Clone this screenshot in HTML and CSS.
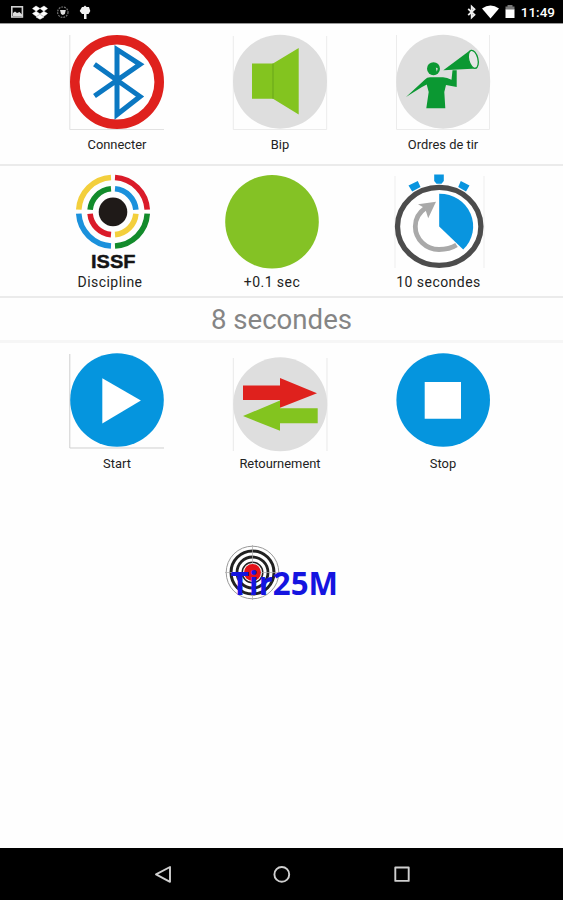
FILE: index.html
```html
<!DOCTYPE html>
<html lang="fr">
<head>
<meta charset="utf-8">
<meta name="viewport" content="width=device-width">
<title>Tir25M</title>
<link rel="stylesheet" href="styles.css">
</head>
<body>
<div class="screen">
  <header class="status">
    <svg class="status-left" viewBox="0 0 100 23">
      <rect x="11.8" y="6.8" width="10.6" height="10.2" fill="none" stroke="#d0d0d0" stroke-width="1.6"/>
      <path d="M13 16v-3l2-1.500 2 1.500 2.500-1 2.500 2.500V16z" fill="#ddd"/>
      <path d="M36 6l4 2.500-3.800 2.700L32.500 8.600zM44 6l3.500 2.600-3.700 2.600L40 8.500zM32.500 13.500l3.700-2.300L40 14l-3.800 2.300zM47.500 13.500l-3.700-2.300L40 14l3.900 2.300zM36 17l4-2.600 4 2.600-4 2.300z" fill="#fff" stroke="#fff" stroke-width=".5"/>
      <circle cx="62.800" cy="12.200" r="5.200" fill="none" stroke="#777" stroke-width="1.200" stroke-dasharray="1.800 1"/>
      <path d="M60 10h5.800l-1 4-2 1-1.800-1z" fill="#ddd"/>
      <path d="M82 7l1.500 0 1.500-1.500 1.600 1.500H89l1.300 4-1.800 3h-2v5h-2.500v-5H82l-2.300-3z" fill="#f2f2f2"/>
    </svg>
    <div class="status-right">
      <svg class="status-icons" viewBox="464 0 54 23">
        <path d="M468.200 8.800l6.300 6-2.800 2.700V6.500l2.800 2.700-6.300 6" fill="none" stroke="#eee" stroke-width="1.800"/>
        <path d="M482 8.500q8.500-6 17 0l-8.500 10z" fill="#fff"/>
        <path d="M505.500 6.500h2V5h5v1.500h2V10h-9z" fill="#777"/>
        <path d="M505.500 9.500h9v8.500h-9z" fill="#fff"/>
      </svg>
      <span class="clock">11:49</span>
    </div>
  </header>

  <main>
    <section class="row row-top">
      <div class="action">
        <svg class="icon" viewBox="68 33 98 98">
          <path d="M69.800 35v94.500H164" fill="none" stroke="#e2e2e2"/>
          <circle cx="117" cy="82" r="42.200" fill="#fff" stroke="#df211d" stroke-width="9.600"/>
          <path d="M94.500 64.300L140 96.500 117 114.500V49.500L140 64.300 94.500 96" fill="none" stroke="#0b78c2" stroke-width="5"/>
        </svg>
        <span class="label">Connecter</span>
      </div>
      <div class="action">
        <svg class="icon" viewBox="231 33 98 98">
          <path d="M233.300 36v93.500h93.400V36" fill="none" stroke="#ececec"/>
          <circle cx="280" cy="81.700" r="47" fill="#dedede"/>
          <path d="M252 63.500h21L298.700 48v66.500L273 98.800h-21z" fill="#83c41f"/>
          <path d="M273 63.500v35.300" stroke="#68a51a"/>
        </svg>
        <span class="label">Bip</span>
      </div>
      <div class="action">
        <svg class="icon" viewBox="394 33 98 98">
          <path d="M396.500 35v94.500h93V35" fill="none" stroke="#ececec"/>
          <circle cx="443.200" cy="81.700" r="47" fill="#dedede"/>
          <circle cx="433.500" cy="68.700" r="6.500" fill="#0b9832"/>
          <path d="M435.800 67.500l2 1-1 3.300z" fill="#dedede"/>
          <path d="M406 97l19-17.500q2-2.200 5-2.200h13q4 0 8.500 2.500l1-9.500h4.200V87l-10.700-2-1.700 7 1 16.200h-19l2.400-16.200-2-7.500-4.700 2.500z" fill="#0b9832"/>
          <path d="M443.300 70.300L470.500 50l6.500 18.500z" fill="#0b9832"/>
          <ellipse cx="473.300" cy="59.300" rx="4.600" ry="9.200" transform="rotate(-14 473.300 59.300)" fill="#e6e6e6" stroke="#0b9832" stroke-width="1.300"/>
        </svg>
        <span class="label">Ordres de tir</span>
      </div>
    </section>

    <section class="row row-middle">
      <div class="action">
        <svg class="icon" viewBox="64 173 98 98">
          <g fill="none" stroke-width="5.600">
            <path d="M78.760 209.700a34.300 34.300 0 0 1 32.240-32.240" stroke="#f3cf3c"/>
            <path d="M115 177.460a34.300 34.300 0 0 1 32.240 32.240" stroke="#da1b29"/>
            <path d="M147.240 213.700a34.300 34.300 0 0 1-32.240 32.240" stroke="#128b2b"/>
            <path d="M111 245.940a34.300 34.300 0 0 1-32.240-32.240" stroke="#1b91dc"/>
            <path d="M90.100 209.700a23 23 0 0 1 20.900-20.900" stroke="#128b2b"/>
            <path d="M115 188.800a23 23 0 0 1 20.900 20.900" stroke="#1b91dc"/>
            <path d="M135.900 213.700a23 23 0 0 1-20.900 20.900" stroke="#f3cf3c"/>
            <path d="M111 234.600a23 23 0 0 1-20.900-20.900" stroke="#da1b29"/>
          </g>
          <circle cx="113" cy="211.900" r="14.300" fill="#1f1a18"/>
          <text class="issf" x="91" y="267.500" textLength="44.500" lengthAdjust="spacingAndGlyphs">ISSF</text>
        </svg>
        <span class="label label-discipline">Discipline</span>
      </div>
      <div class="action">
        <svg class="icon" viewBox="223 173 98 98"><circle cx="272" cy="221.700" r="46.800" fill="#84c225"/></svg>
        <span class="label">+0.1 sec</span>
      </div>
      <div class="action">
        <svg class="icon" viewBox="389.500 173 98 98">
          <path d="M394.500 176v92M483.500 176v92" stroke="#eee"/>
          <ellipse cx="438.700" cy="226.400" rx="41.700" ry="39" fill="#fff" stroke="#4c4c4c" stroke-width="5.300"/>
          <path d="M433.700 174.500h9.600v6.500l-2.300 2.800h-5l-2.300-2.800zM408 185.500l9.300-4.500 2.700 6-8.300 4.500zM460.300 181l8.700 4.500-3.500 6-7.800-4.500z" fill="#0995df"/>
          <path d="M456 245q-7 4.500-17.500 4.500a23.700 23 0 0 1-23.700-23q0-11.500 10.200-18.500" fill="none" stroke="#a9a9a9" stroke-width="4.800"/>
          <path d="M435.500 201.800L417.500 204.300l7 4 3.200 10z" fill="#a9a9a9"/>
          <path d="M438.700 226.400v-32.700a33.500 32.600 0 0 1 24 55.800z" fill="#0995df"/>
        </svg>
        <span class="label">10 secondes</span>
      </div>
    </section>

    <div class="duration">8 secondes</div>

    <section class="row row-bottom">
      <div class="action">
        <svg class="icon" viewBox="68 351 98 101">
          <path d="M69.800 354v94H164" fill="none" stroke="#cfcfcf"/>
          <circle cx="117" cy="400" r="46.800" fill="#0595de"/>
          <path d="M102.300 378.300L140.900 400.500 102.300 423.500z" fill="#fff"/>
        </svg>
        <span class="label">Start</span>
      </div>
      <div class="action">
        <svg class="icon" viewBox="231 351 98 101">
          <path d="M233.300 358v93M327 358v93" stroke="#e9e9e9"/>
          <circle cx="280.200" cy="404.300" r="47" fill="#dedede"/>
          <path d="M243 385.600h37V378l37 15.200-37 14.500V400h-37z" fill="#df211d"/>
          <path d="M243 416l37-15.500v7.800h37.700v15H280v7.500z" fill="#83c41f"/>
        </svg>
        <span class="label">Retournement</span>
      </div>
      <div class="action">
        <svg class="icon" viewBox="394 351 98 101">
          <circle cx="443.200" cy="400" r="46.800" fill="#0595de"/>
          <path d="M424.700 382H461v36.700h-36.300z" fill="#fff"/>
        </svg>
        <span class="label">Stop</span>
      </div>
    </section>

    <svg class="brand" viewBox="222 542 120 62">
      <g fill="none" stroke="#222">
        <circle cx="252.500" cy="572.500" r="26.300" fill="#fff" stroke="#999" stroke-width="1"/>
        <circle cx="252.500" cy="572.500" r="21.500" stroke-width="3"/>
        <circle cx="252.500" cy="572.500" r="15.500" stroke-width="2.800"/>
        <circle cx="252.500" cy="572.500" r="10.300" stroke-width="1.500"/>
        <path d="M252.500 545v55M225 572.500h55" stroke="#aaa" stroke-width=".7"/>
      </g>
      <circle cx="252.500" cy="572.500" r="8.500" fill="#e31219"/>
      <text class="brand-name" x="231" y="594.500" textLength="107" lengthAdjust="spacingAndGlyphs">Tir25M</text>
    </svg>
  </main>

  <nav class="navbar">
    <svg viewBox="0 848 563 52">
      <g fill="none" stroke="#cfcfcf" stroke-width="1.900" stroke-linejoin="round">
        <path d="M170 867v14.800L156 874.400z"/>
        <circle cx="281.800" cy="874.400" r="7.400"/>
        <rect x="395.300" y="867.500" width="13.400" height="13.400"/>
      </g>
    </svg>
  </nav>
</div>
</body>
</html>
```
FILE: styles.css
```css
* { box-sizing: border-box; }

body {
  margin: 0;
  background: #fefefe;
  font-family: Roboto, "Liberation Sans", sans-serif;
  color: #222;
}

svg { display: block; }

.screen {
  display: flex;
  flex-direction: column;
  width: 563px;
  height: 900px;
}

.status {
  display: flex;
  justify-content: space-between;
  height: 24px;
  background: #000;
  border-bottom: 1px solid #999;
}

.status-left { width: 100px; height: 23px; }
.status-right { display: flex; padding-right: 8px; }
.status-icons { width: 54px; height: 23px; }

.clock {
  width: 37px;
  text-align: right;
  font-size: 13.5px;
  font-weight: 500;
  line-height: 25px;
  color: #fff;
}

main { flex: 1; }

.row { display: grid; }

.row-top,
.row-bottom {
  grid-template-columns: repeat(3, 163px);
  padding-left: 35.5px;
}

.row-top {
  height: 142px;
  padding-top: 9px;
  border-bottom: 2px solid #ebebeb;
}

.row-middle {
  grid-template-columns: 162px 156px 177px;
  height: 132px;
  padding: 7px 0 0 32px;
  border-bottom: 2px solid #ebebeb;
}

.row-bottom { padding-top: 8px; }

.action {
  display: flex;
  flex-direction: column;
  align-items: center;
}

.icon { width: 98px; height: 98px; }

.label {
  margin-top: 6px;
  font-size: 12.9px;
  line-height: 16px;
  white-space: nowrap;
}

.row-middle .label {
  margin-top: 3px;
  font-size: 14px;
  letter-spacing: .45px;
}

.row-middle .label-discipline { margin-right: 6px; }

.row-bottom .icon { height: 101px; }
.row-bottom .label { margin-top: 4px; }

.issf {
  font: bold 17.5px "Liberation Sans", sans-serif;
  fill: #151515;
  stroke: #151515;
  stroke-width: .4px;
}

.duration {
  height: 45px;
  border-bottom: 3px solid #f6f6f6;
  font-size: 27.6px;
  line-height: 44px;
  text-align: center;
  color: #858585;
}

.brand {
  width: 120px;
  height: 62px;
  margin: 70px 0 0 222px;
}

.brand-name {
  font: bold 32px "Open Sans", sans-serif;
  fill: #1414e0;
}

.navbar { height: 52px; background: #000; }
.navbar svg { width: 563px; height: 52px; }
```
